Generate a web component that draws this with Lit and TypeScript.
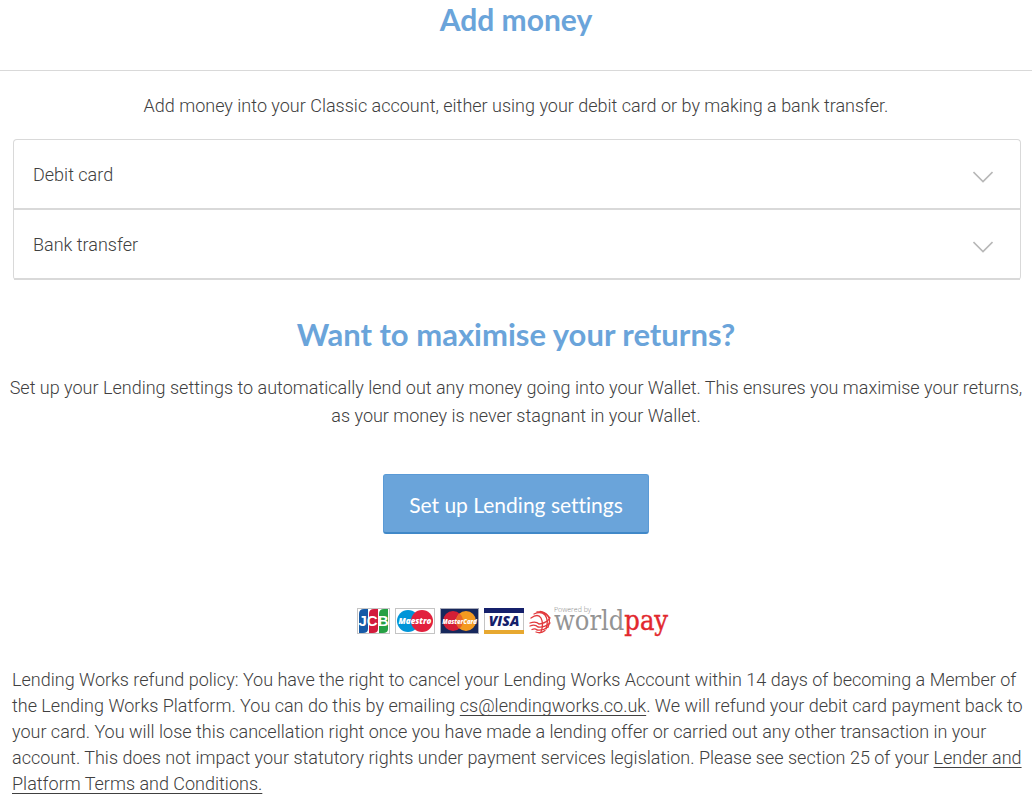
import { LitElement, html, css } from "lit";
import { customElement, property } from "lit/decorators.js";

@customElement("accordion-row")
class AccordionRow extends LitElement {
  @property() label = "";

  static styles = css`
    :host {
      display: block;
      border-bottom: 2px solid #d9d9d9;
    }
    .toggle {
      display: flex;
      align-items: center;
      justify-content: space-between;
      box-sizing: border-box;
      width: 100%;
      height: 68px;
      padding: 2px 27px 0 19px;
      border: 0;
      background: none;
      color: inherit;
      font: inherit;
      text-align: left;
      cursor: pointer;
    }
    .chevron {
      width: 20px;
      height: 12px;
      margin-top: 4px;
      fill: none;
      stroke: #b8b8b8;
      stroke-width: 1.6;
    }
  `;

  render() {
    return html`<button class="toggle" type="button" aria-expanded="false">
      <span>${this.label}</span>
      <svg class="chevron" viewBox="0 0 20 12" aria-hidden="true"><path d="M0.5 1 L10 10.5 L19.5 1" /></svg>
    </button>`;
  }
}

@customElement("payment-logos")
class PaymentLogos extends LitElement {
  static styles = css`
    :host {
      display: flex;
      justify-content: center;
      gap: 5px;
    }
    svg {
      display: block;
      height: 36px;
    }
    .brand {
      font-family: "Open Sans", sans-serif;
      font-weight: 800;
      font-style: italic;
      fill: #fff;
    }
    .jcb {
      font-family: "Liberation Sans", sans-serif;
      font-size: 15px;
      font-weight: 700;
      fill: #fff;
    }
    .maestro {
      font-size: 8px;
    }
    .mastercard {
      font-size: 6px;
    }
    .visa {
      font-size: 14px;
      fill: #15206b;
    }
    .powered {
      font-family: "Open Sans", sans-serif;
      font-size: 7px;
      fill: #888;
    }
    .world {
      font-family: "DejaVu Serif Condensed", "DejaVu Serif", serif;
      font-size: 27px;
      fill: #949494;
    }
    .pay {
      fill: #e2282e;
      stroke: #e2282e;
      stroke-width: 0.4;
    }
    .globe {
      fill: none;
      stroke: #e2393c;
      stroke-width: 1.3;
      stroke-linecap: round;
    }
  `;

  render() {
    return html`
      <svg width="33" viewBox="0 0 33 36" role="img" aria-label="JCB">
        <rect x="0.5" y="4.5" width="32" height="25" fill="#fff" stroke="#c4c4c4" />
        <path d="M2 10 Q2 5 7 5 H11 V25 Q11 29 6 29 H2Z" fill="#175aa6" />
        <path d="M12 10 Q12 5 17 5 H21 V25 Q21 29 16 29 H12Z" fill="#d21c3c" />
        <path d="M22 10 Q22 5 27 5 H31 V25 Q31 29 26 29 H22Z" fill="#26a044" />
        <text class="jcb" x="16.5" y="22" text-anchor="middle">JCB</text>
      </svg>
      <svg width="40" viewBox="0 0 40 36" role="img" aria-label="Maestro">
        <rect x="0.5" y="4.5" width="39" height="25" fill="#fff" stroke="#c4c4c4" />
        <circle cx="13" cy="17" r="11" fill="#0095d8" />
        <circle cx="27" cy="17" r="11" fill="#e2203d" />
        <text class="brand maestro" x="20" y="20" text-anchor="middle">Maestro</text>
      </svg>
      <svg width="39" viewBox="0 0 39 36" role="img" aria-label="MasterCard">
        <rect x="0.5" y="4.5" width="38" height="25" fill="#17285c" stroke="#a6a9b8" />
        <circle cx="13" cy="17" r="10" fill="#d31f36" />
        <circle cx="26" cy="17" r="10" fill="#f49a20" />
        <path d="M19.5 9.4 A10 10 0 0 1 19.5 24.6 A10 10 0 0 1 19.5 9.4" fill="#e8642a" />
        <text class="brand mastercard" x="19.5" y="19.5" text-anchor="middle">MasterCard</text>
      </svg>
      <svg width="40" viewBox="0 0 40 36" role="img" aria-label="Visa">
        <rect x="0.5" y="4.5" width="39" height="25" fill="#fff" stroke="#c4c4c4" />
        <rect x="0" y="4" width="40" height="5" fill="#15206b" />
        <rect x="0" y="26" width="40" height="4" fill="#e7a830" />
        <text class="brand visa" x="20" y="22" text-anchor="middle">VISA</text>
      </svg>
      <svg width="147" viewBox="0 0 147 36" role="img" aria-label="Powered by worldpay">
        <g class="globe">
          <path d="M5 10 Q12 7 16 11 Q20 16 17 25" />
          <path d="M11 7.5 Q16 8 19 12 Q22 17 19 23" />
          <path d="M2 14 Q9 9 12 14 Q15 20 12 28" />
          <path d="M8 8 Q15 7 21 14" />
          <path d="M1 19 Q7 17 10 20 Q15 20 20.5 15" />
          <path d="M1 22 Q6 20 9 23 Q15 24 21 19" />
          <path d="M3 25.5 Q6 24 8 26 Q14 27 19 23" />
          <path d="M7 28 Q12 30 16 26.5" />
        </g>
        <text class="powered" x="25" y="8">Powered by</text>
        <text class="world" x="25" y="26">world<tspan class="pay">pay</tspan></text>
      </svg>
    `;
  }
}

@customElement("app-root")
class AppRoot extends LitElement {
  static styles = css`
    :host {
      display: block;
      min-height: 100vh;
      background: #fff;
      color: #404040;
      font-family: Roboto, "Liberation Sans", sans-serif;
      font-size: 18px;
      font-weight: 300;
      line-height: 28px;
    }
    h1,
    h2,
    p {
      margin: 0;
    }
    h1,
    h2 {
      color: #6aa4da;
      font-family: Lato, sans-serif;
      font-size: 30px;
      font-weight: 700;
      line-height: 38px;
      text-align: center;
    }
    h2 {
      font-size: 31px;
    }
    .top {
      padding-bottom: 32px;
      border-bottom: 1px solid #d9d9d9;
    }
    .content {
      padding: 21px 4px 0;
    }
    .lead {
      text-align: center;
    }
    .accordion {
      margin: 19px 7px 35px 9px;
      border: 1px solid #d9d9d9;
      border-bottom: 0;
      border-radius: 4px;
    }
    .pitch {
      margin-top: 21px;
      text-align: center;
    }
    .action {
      display: flex;
      justify-content: center;
      margin: 44px 0 70px;
    }
    .primary {
      box-sizing: border-box;
      height: 60px;
      padding: 2px 25px 0;
      border: 1px solid #5a9ad6;
      border-bottom: 2px solid #4088c8;
      border-radius: 3px;
      background: #6aa4da;
      color: #fff;
      font-family: Lato, sans-serif;
      font-size: 21px;
      font-weight: 400;
      font-variant-ligatures: none;
      cursor: pointer;
    }
    .policy {
      margin: 27px 0 0 8px;
      line-height: 26px;
    }
    a {
      color: inherit;
      text-decoration: underline;
      text-decoration-thickness: 1px;
      text-underline-offset: 3px;
      text-decoration-skip-ink: none;
    }
  `;

  render() {
    return html`
      <header class="top"><h1>Add money</h1></header>
      <main class="content">
        <p class="lead">Add money into your Classic account, either using your debit card or by making a bank transfer.</p>
        <div class="accordion">
          <accordion-row label="Debit card"></accordion-row>
          <accordion-row label="Bank transfer"></accordion-row>
        </div>
        <h2>Want to maximise your returns?</h2>
        <p class="pitch">
          Set up your Lending settings to automatically lend out any money going into your Wallet. This ensures you maximise your returns, as your
          money is never stagnant in your Wallet.
        </p>
        <div class="action"><button class="primary" type="button">Set up Lending settings</button></div>
        <payment-logos></payment-logos>
        <p class="policy">
          Lending Works refund policy: You have the right to cancel your Lending Works Account within 14 days of becoming a Member of the Lending
          Works Platform. You can do this by emailing <a href="mailto:cs@lendingworks.co.uk">cs@lendingworks.co.uk</a>. We will refund your debit
          card payment back to your card. You will lose this cancellation right once you have made a lending offer or carried out any other
          transaction in your account. This does not impact your statutory rights under payment services legislation. Please see section 25 of your
          <a href="#terms">Lender and Platform Terms and Conditions.</a>
        </p>
      </main>
    `;
  }
}
